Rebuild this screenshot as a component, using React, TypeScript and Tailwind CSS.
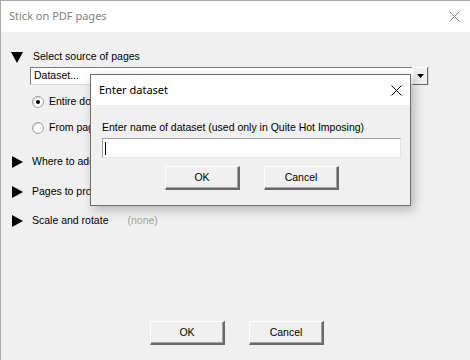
import React from "react";

const UI = "font-['Liberation_Sans',Arial,sans-serif]";
const TITLE = "font-['Noto_Sans','Open_Sans',sans-serif]";

function CloseGlyph({ color }: { color: string }) {
  return (
    <svg width="11" height="11" viewBox="0 0 11 11" className="block">
      <path d="M0.5 0.5 L10.5 10.5 M10.5 0.5 L0.5 10.5" stroke={color} strokeWidth="1" fill="none" />
    </svg>
  );
}

function Arrow({ open }: { open?: boolean }) {
  return open ? (
    <svg width="12" height="12" viewBox="0 0 12 12" className="block">
      <polygon points="0,1 12,1 6,12" fill="#000" />
    </svg>
  ) : (
    <svg width="12" height="12" viewBox="0 0 12 12" className="block">
      <polygon points="1,0 12,6 1,12" fill="#000" />
    </svg>
  );
}

function Radio({ checked }: { checked?: boolean }) {
  return (
    <span className="flex h-[12px] w-[12px] items-center justify-center rounded-full border border-[#a0a0a0] bg-white shadow-[inset_1px_1px_0_#d8d8d8]">
      {checked && <span className="h-[4px] w-[4px] rounded-full bg-black" />}
    </span>
  );
}

function WinButton({ label, className = "" }: { label: string; className?: string }) {
  return (
    <button
      className={`flex h-[24px] w-[75px] items-center justify-center border-t border-l border-t-white border-l-white border-r-2 border-b-2 border-r-[#696969] border-b-[#696969] bg-[#f0f0f0] text-[10.5px] text-black shadow-[inset_-1px_-1px_0_#a0a0a0] ${className}`}
    >
      {label}
    </button>
  );
}

function Section({ label, note }: { label: string; note?: string }) {
  return (
    <div className="flex h-[16px] items-center">
      <Arrow />
      <span className="ml-[9px]">{label}</span>
      {note && <span className="ml-[19px] text-[#a0a0a0]">{note}</span>}
    </div>
  );
}

export default function App() {
  return (
    <div
      className={`relative h-[360px] w-[470px] overflow-hidden border-l border-t border-[#a8a8a8] bg-[#f0f0f0] text-[10.5px] text-black ${UI}`}
    >
      {/* title bar */}
      <div className="flex h-[31px] items-center justify-between bg-white pl-[8px] pr-[10px]">
        <span className={`${TITLE} text-[11px] text-[#808080]`}>Stick on PDF pages</span>
        <CloseGlyph color="#7a7a7a" />
      </div>

      <div className="pl-[10px] pt-[17px]">
        <div className="flex h-[16px] items-center">
          <Arrow open />
          <span className="ml-[10px]">Select source of pages</span>
        </div>

        <div className="ml-[19px] mt-[2px] flex h-[18px] w-[399px] items-stretch border border-t-[#7a7a7a] border-l-[#7a7a7a] border-r-[#dcdcdc] border-b-[#dcdcdc] bg-white">
          <span className="flex flex-1 items-center pl-[3px]">Dataset...</span>
          <span className="-my-px flex w-[16px] items-center justify-center border border-t-white border-l-white border-r-[#696969] border-b-[#696969] bg-[#f0f0f0]">
            <svg width="7" height="4" viewBox="0 0 7 4">
              <polygon points="0,0 7,0 3.5,4" fill="#000" />
            </svg>
          </span>
        </div>

        <div className="ml-[21px] mt-[9px] flex h-[16px] items-center">
          <Radio checked />
          <span className="ml-[5px]">Entire document</span>
        </div>
        <div className="ml-[21px] mt-[10px] flex h-[16px] items-center">
          <Radio />
          <span className="ml-[5px]">From page</span>
        </div>

        <div className="mt-[18px]">
          <Section label="Where to add" />
        </div>
        <div className="mt-[14px]">
          <Section label="Pages to process" />
        </div>
        <div className="mt-[13px]">
          <Section label="Scale and rotate" note="(none)" />
        </div>
      </div>

      <div className="mt-[92px] flex gap-[24px] pl-[149px]">
        <WinButton label="OK" />
        <WinButton label="Cancel" />
      </div>

      {/* modal dialog */}
      <div className="absolute left-[89px] top-[73px] flex h-[132px] w-[321px] flex-col border border-[#6e6e6e] bg-[#f0f0f0] shadow-[3px_4px_10px_rgba(0,0,0,0.25)]">
        <div className="flex h-[30px] items-center justify-between bg-white pl-[8px] pr-[8px]">
          <span className={`${TITLE} text-[11px] text-black`}>Enter dataset</span>
          <CloseGlyph color="#000" />
        </div>
        <div className="pl-[11px] pt-[15px]">
          <div className="leading-[14px]">Enter name of dataset (used only in Quite Hot Imposing)</div>
          <div className="mt-[4px] flex h-[20px] w-[299px] items-center border border-t-[#a0a0a0] border-l-[#a0a0a0] border-r-[#e3e3e3] border-b-[#e3e3e3] bg-white pl-[2px]">
            <span className="h-[13px] w-px bg-black" />
          </div>
          <div className="mt-[8px] flex gap-[24px] pl-[63px]">
            <WinButton label="OK" />
            <WinButton label="Cancel" />
          </div>
        </div>
      </div>
    </div>
  );
}
